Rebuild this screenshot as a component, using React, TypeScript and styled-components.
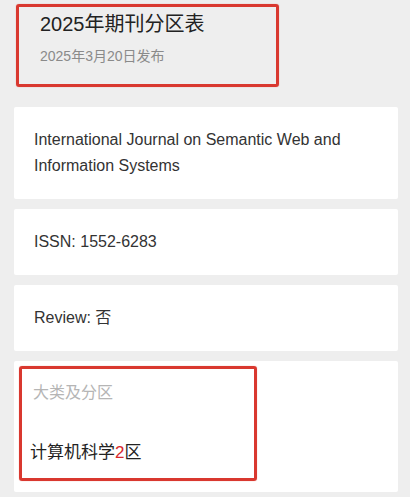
import React from "react";
import styled, { createGlobalStyle } from "styled-components";

const GlobalStyle = createGlobalStyle`
  html, body {
    margin: 0;
    padding: 0;
    background: #eeeeee;
  }
  body {
    font-family: "Liberation Sans", Arial, "Noto Sans CJK SC", sans-serif;
    color: #333333;
  }
  * { box-sizing: border-box; }
`;

const Page = styled.div`
  width: 410px;
  min-height: 497px;
  background: #eeeeee;
  padding: 4px 12px 0 14px;
  display: flex;
  flex-direction: column;
`;

const Header = styled.header`
  width: 263px;
  height: 83px;
  margin-left: 2px;
  border: 3px solid #d9382f;
  border-radius: 3px;
  box-shadow: 0 0 1px rgba(217, 56, 47, 0.6);
  padding: 4px 0 0 21px;
  display: flex;
  flex-direction: column;
`;

const Title = styled.h1`
  margin: 0;
  font-size: 20px;
  line-height: 26px;
  font-weight: normal;
  color: #222222;
  font-family: "Liberation Sans", Arial, "Noto Sans CJK SC", sans-serif;
`;

const DateLine = styled.div`
  margin-top: 9px;
  font-size: 14px;
  line-height: 20px;
  color: #8a8a8a;
`;

const List = styled.div`
  margin-top: 20px;
  display: flex;
  flex-direction: column;
  gap: 10px;
`;

const Card = styled.section<{ $tight?: boolean }>`
  background: #ffffff;
  border-radius: 2px;
  padding: ${(p) => (p.$tight ? "5px 5px 11px 5px" : "20px 20px")};
  font-size: 16px;
  line-height: 26px;
  color: #333333;
`;

const Highlight = styled.div`
  width: 238px;
  height: 115px;
  border: 3px solid #d9382f;
  border-radius: 3px;
  box-shadow: 0 0 1px rgba(217, 56, 47, 0.6);
  padding: 12px 0 0 8px;
  display: flex;
  flex-direction: column;
`;

const Label = styled.div`
  margin-left: 3px;
  font-size: 16px;
  line-height: 24px;
  color: #b5b5b5;
`;

const Value = styled.div`
  margin-top: 36px;
  font-size: 17px;
  line-height: 24px;
  color: #222222;
`;

const Red = styled.span`
  color: #d8272b;
`;

export default function App() {
  return (
    <>
      <GlobalStyle />
      <Page>
        <Header>
          <Title>2025年期刊分区表</Title>
          <DateLine>2025年3月20日发布</DateLine>
        </Header>
        <List>
          <Card>International Journal on Semantic Web and Information Systems</Card>
          <Card>ISSN: 1552-6283</Card>
          <Card>Review: 否</Card>
          <Card $tight>
            <Highlight>
              <Label>大类及分区</Label>
              <Value>
                计算机科学<Red>2</Red>区
              </Value>
            </Highlight>
          </Card>
        </List>
      </Page>
    </>
  );
}
